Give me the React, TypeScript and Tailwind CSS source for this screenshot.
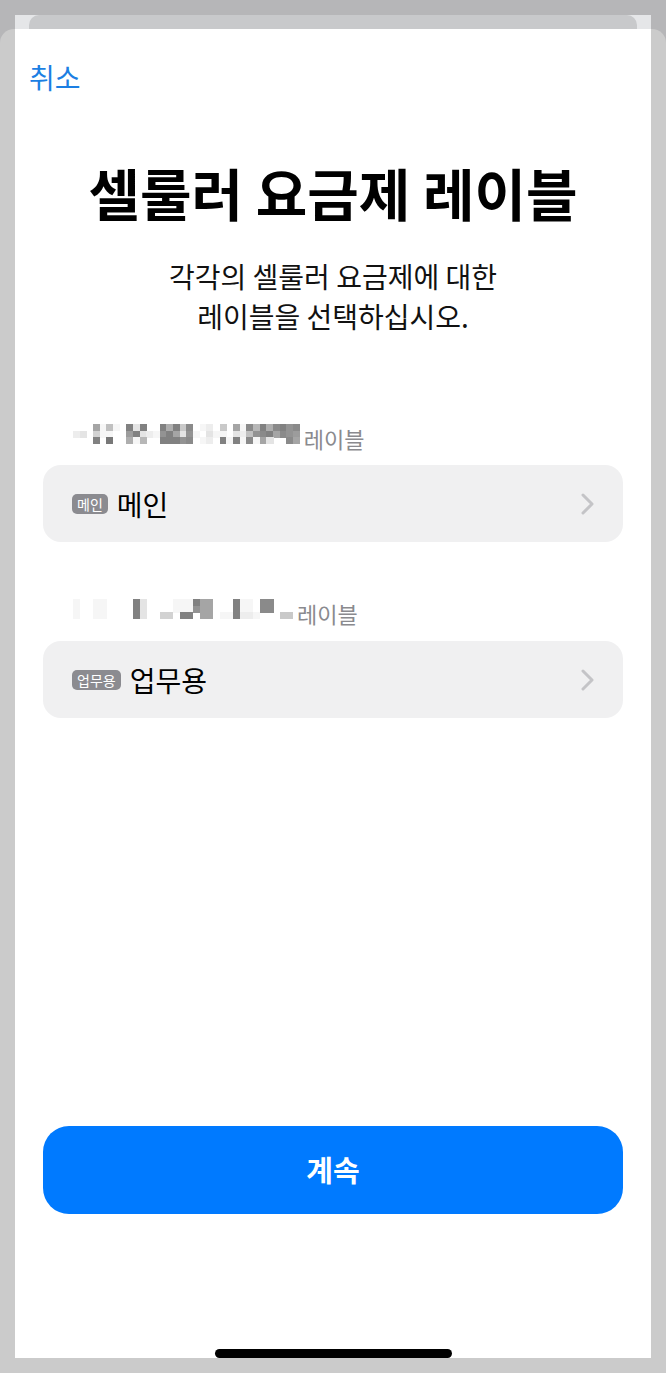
import React from 'react';

const FONT = { fontFamily: '"Noto Sans CJK KR", "Noto Sans", sans-serif' };

// blurred-out numbers, one hex digit per cell (f = blank)
const mosaics = {
  main: [
    'fff5e8ef1c1ff16192fedf9f5e27162132',
    'dcfaeeff41cde315c3efceefcd83215234',
    'fff1f0ff6e7ff11132fedf1e1e2e5cff25',
  ],
  work: [
    'effeeffff1cffffeee155fff1eef22fff',
    'effeeffff1cffffeee355fff1eef22fff',
    'effeeffff1cffaaf11f55fee1ddefff99',
  ],
};

function Mosaic({ rows }: { rows: string[] }) {
  const cell = 6.67;
  const cols = rows[0].length;
  return (
    <svg
      width={cols * cell}
      height={rows.length * cell}
      shapeRendering="crispEdges"
      className="shrink-0 -mt-[8px]"
    >
      {rows.map((row, r) =>
        row.split('').map((ch, c) => {
          if (ch === 'f') return null;
          const v = 120 + parseInt(ch, 16) * 9;
          return (
            <rect
              key={`${r}-${c}`}
              x={c * cell}
              y={r * cell}
              width={cell + 0.4}
              height={cell + 0.4}
              fill={`rgb(${v},${v},${v})`}
            />
          );
        })
      )}
    </svg>
  );
}

function Chevron() {
  return (
    <svg width="13" height="22" viewBox="0 0 13 22" fill="none">
      <path
        d="M2 2L11 11L2 20"
        stroke="#c4c4c7"
        strokeWidth="3"
        strokeLinecap="round"
        strokeLinejoin="round"
      />
    </svg>
  );
}

function PlanRow({ badge, label }: { badge: string; label: string }) {
  return (
    <div className="mx-[28px] h-[77px] rounded-[18px] bg-[#f0f0f1] flex items-center pl-[29px] pr-[29px]">
      <span className="h-[20px] px-[5px] rounded-[5px] bg-[#8b8b90] text-white text-[14px] leading-[20px]">
        {badge}
      </span>
      <span className="ml-[9px] text-[28px] leading-[34px] text-black">{label}</span>
      <span className="ml-auto flex">
        <Chevron />
      </span>
    </div>
  );
}

function SectionLabel({ rows }: { rows: string[] }) {
  return (
    <div className="ml-[58px] h-[24px] flex items-center gap-[4px]">
      <Mosaic rows={rows} />
      <span className="text-[22px] leading-[24px] text-[#8a8a8e]">레이블</span>
    </div>
  );
}

function SideMargin({ side }: { side: 'left' | 'right' }) {
  return (
    <div className="w-[15px] flex flex-col bg-[#b6b6b8]">
      <div className="h-[14px]" />
      <div
        className={`flex-1 bg-[#cbcbcb] ${side === 'left' ? 'rounded-tl-[14px]' : 'rounded-tr-[14px]'}`}
      />
    </div>
  );
}

export default function App() {
  return (
    <div className="w-[666px] h-[1373px] flex flex-col bg-[#cbcbcb]" style={FONT}>
      <div className="h-[15px] bg-[#b6b6b8]" />
      <div className="flex flex-1">
        <SideMargin side="left" />
        <div className="flex-1 flex flex-col">
          {/* sheet behind, peeking out */}
          <div className="h-[14px] bg-[#e5e6e8] px-[14px]">
            <div className="h-full rounded-t-[10px] bg-[#c8c9cb]" />
          </div>

          <div className="flex-1 flex flex-col bg-white">
            <div className="pt-[32px] pl-[14px]">
              <span className="text-[28px] leading-[32px] text-[#1c7fe3]">취소</span>
            </div>

            <h1 className="mt-[66px] text-center text-[56px] leading-[64px] font-bold text-black">
              셀룰러 요금제 레이블
            </h1>
            <p className="mt-[32px] text-center text-[28px] leading-[40px] text-[#111]">
              각각의 셀룰러 요금제에 대한
              <br />
              레이블을 선택하십시오.
            </p>

            <div className="mt-[90px]">
              <SectionLabel rows={mosaics.main} />
            </div>
            <div className="mt-[15px]">
              <PlanRow badge="메인" label="메인" />
            </div>

            <div className="mt-[59px]">
              <SectionLabel rows={mosaics.work} />
            </div>
            <div className="mt-[16px]">
              <PlanRow badge="업무용" label="업무용" />
            </div>

            <button className="mt-auto mx-[28px] h-[88px] rounded-[26px] bg-[#007aff] text-white text-[29px] font-semibold">
              계속
            </button>

            <div className="mt-[135px] mx-auto w-[237px] h-[9px] rounded-full bg-black" />
          </div>
        </div>
        <SideMargin side="right" />
      </div>
      <div className="h-[15px]" />
    </div>
  );
}
